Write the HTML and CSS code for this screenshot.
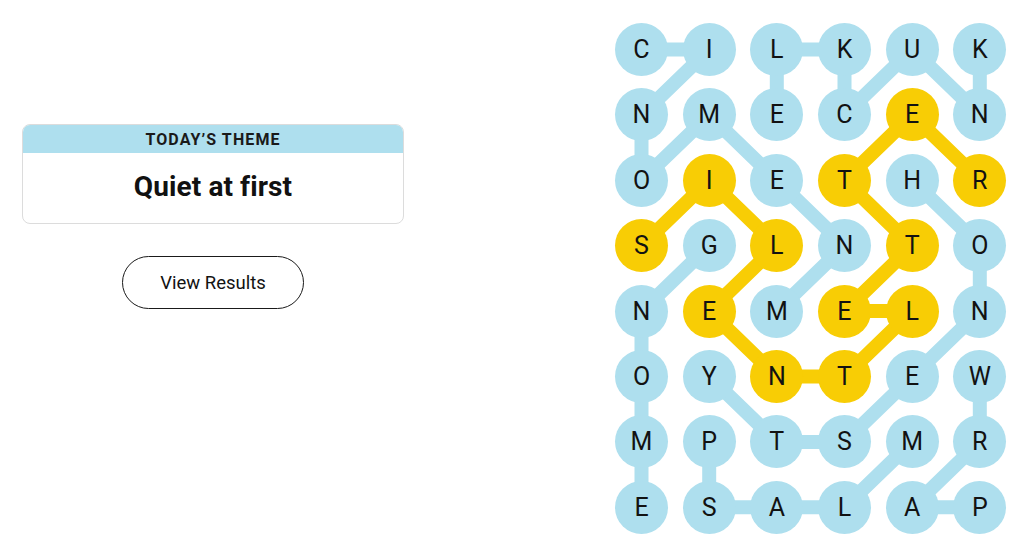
FILE: index.html
```html
<!DOCTYPE html>
<html>
<head>
<meta charset="utf-8">
<link rel="stylesheet" href="styles.css">
</head>
<body>
<main class="page">
  <section class="side">
    <div class="theme-card">
      <div class="theme-head">TODAY’S THEME</div>
      <div class="theme-body">Quiet at first</div>
    </div>
    <button class="results-btn">View Results</button>
  </section>
  <section class="board">
    <svg class="links" width="392" height="511" viewBox="0 0 392 511">
      <g class="blue" stroke="#aedfee" stroke-width="14" stroke-linecap="round" fill="none">
        <!-- MNEMONIC -->
        <polyline points="161.8,288.1 229.5,222.7 161.8,157.3 94.2,91.9 26.5,157.3 26.5,91.9 94.2,26.5 26.5,26.5"/>
        <!-- GNOME -->
        <polyline points="94.2,222.7 26.5,288.1 26.5,353.5 26.5,418.9 26.5,484.3"/>
        <!-- PSALM -->
        <polyline points="94.2,418.9 94.2,484.3 161.8,484.3 229.5,484.3 297.1,418.9"/>
        <!-- WRAP -->
        <polyline points="364.8,353.5 364.8,418.9 297.1,484.3 364.8,484.3"/>
        <!-- KNUCKLE -->
        <polyline points="364.8,26.5 364.8,91.9 297.1,26.5 229.5,91.9 229.5,26.5 161.8,26.5 161.8,91.9"/>
        <!-- HONESTY -->
        <polyline points="297.1,157.3 364.8,222.7 364.8,288.1 297.1,353.5 229.5,418.9 161.8,418.9 94.2,353.5"/>
      </g>
      <g class="gold" stroke="#f8cd05" stroke-width="14" stroke-linecap="round" stroke-linejoin="round" fill="none">
        <!-- SILENTLETTER -->
        <polyline points="26.5,222.7 94.2,157.3 161.8,222.7 94.2,288.1 161.8,353.5 229.5,353.5 297.1,288.1 229.5,288.1 297.1,222.7 229.5,157.3 297.1,91.9 364.8,157.3"/>
      </g>
    </svg>
    <div class="grid">
      <span class="cell">C</span><span class="cell">I</span><span class="cell">L</span><span class="cell">K</span><span class="cell">U</span><span class="cell">K</span>
      <span class="cell">N</span><span class="cell">M</span><span class="cell">E</span><span class="cell">C</span><span class="cell span">E</span><span class="cell">N</span>
      <span class="cell">O</span><span class="cell span">I</span><span class="cell">E</span><span class="cell span">T</span><span class="cell">H</span><span class="cell span">R</span>
      <span class="cell span">S</span><span class="cell">G</span><span class="cell span">L</span><span class="cell">N</span><span class="cell span">T</span><span class="cell">O</span>
      <span class="cell">N</span><span class="cell span">E</span><span class="cell">M</span><span class="cell span">E</span><span class="cell span">L</span><span class="cell">N</span>
      <span class="cell">O</span><span class="cell">Y</span><span class="cell span">N</span><span class="cell span">T</span><span class="cell">E</span><span class="cell">W</span>
      <span class="cell">M</span><span class="cell">P</span><span class="cell">T</span><span class="cell">S</span><span class="cell">M</span><span class="cell">R</span>
      <span class="cell">E</span><span class="cell">S</span><span class="cell">A</span><span class="cell">L</span><span class="cell">A</span><span class="cell">P</span>
    </div>
  </section>
</main>
</body>
</html>
```

FILE: styles.css
```css
* { box-sizing: border-box; }
html, body { margin: 0; padding: 0; background: #fff; }
body {
  font-family: Roboto, "Liberation Sans", Arial, sans-serif;
  color: #121212;
  width: 1024px;
  height: 557px;
  overflow: hidden;
}
.page {
  display: flex;
  align-items: flex-start;
}
.side {
  width: 382px;
  margin-left: 22px;
  margin-top: 124px;
  display: flex;
  flex-direction: column;
  align-items: center;
}
.theme-card {
  width: 100%;
  border: 1px solid #dcdcdc;
  border-radius: 8px;
  overflow: hidden;
}
.theme-head {
  background: #aedfee;
  height: 28px;
  display: flex;
  align-items: center;
  justify-content: center;
  font-size: 16px;
  font-weight: 700;
  letter-spacing: 1.1px;
  color: #1a1a1a;
}
.theme-body {
  height: 70px;
  display: flex;
  align-items: center;
  justify-content: center;
  font-size: 28px;
  font-weight: 700;
  letter-spacing: 0.1px;
  color: #111;
  padding-bottom: 4px;
}
.results-btn {
  margin-top: 32px;
  width: 182px;
  height: 53px;
  border: 1px solid #1a1a1a;
  border-radius: 27px;
  background: #fff;
  font-family: inherit;
  font-size: 18.5px;
  color: #121212;
  padding: 0;
}
.board {
  position: relative;
  margin-left: 211px;
  margin-top: 23px;
  width: 392px;
  height: 511px;
}
.links {
  position: absolute;
  left: 0;
  top: 0;
}
.grid {
  position: relative;
  display: grid;
  grid-template-columns: repeat(6, 53px);
  grid-auto-rows: 53px;
  column-gap: 14.66px;
  row-gap: 12.4px;
}
.cell {
  width: 53px;
  height: 53px;
  border-radius: 50%;
  background: #aedfee;
  display: flex;
  align-items: center;
  justify-content: center;
  font-size: 25px;
  font-weight: 400;
  color: #121212;
}
.cell.span { background: #f8cd05; }
```
